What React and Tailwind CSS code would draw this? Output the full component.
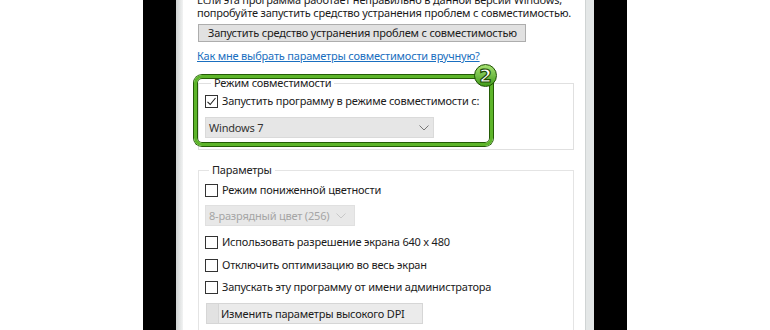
import React from "react";

function Check({ checked }) {
  return (
    <span className="w-[13px] h-[13px] border border-[#333] bg-white flex items-center justify-center shrink-0">
      {checked && (
        <svg width="11" height="11" viewBox="0 0 11 11">
          <path d="M1.5 5.8 L4.2 8.5 L9.5 2" fill="none" stroke="#222" strokeWidth="1.1" />
        </svg>
      )}
    </span>
  );
}

function Row({ checked, children, className }) {
  return (
    <div className={"flex items-center h-[16px] gap-[4px] " + className}>
      <Check checked={checked} />
      <span className="whitespace-nowrap">{children}</span>
    </div>
  );
}

function Chevron({ color }) {
  return (
    <svg width="10" height="6" viewBox="0 0 10 6" className="shrink-0">
      <path d="M0.5 0.5 L5 5 L9.5 0.5" fill="none" stroke={color} strokeWidth="1" />
    </svg>
  );
}

export default function App() {
  return (
    <div className="w-[770px] h-[330px] overflow-hidden bg-white flex font-['Noto_Sans',sans-serif] text-[11px] tracking-[-0.2px] text-[#1b1b1b] leading-[16px]">
      <div className="w-[143px] shrink-0 bg-white" />
      <div className="w-[33px] shrink-0 bg-black" />
      <div className="w-[7px] shrink-0 bg-gradient-to-r from-[#cdd1d1] to-[#f2f3f3]" />
      <div className="w-[402px] shrink-0 bg-white pl-[14px] flex flex-col">
        <p className="mt-[-7px] leading-[13px] whitespace-nowrap">
          Если эта программа работает неправильно в данной версии Windows,
          <br />
          попробуйте запустить средство устранения проблем с совместимостью.
        </p>
        <div className="mt-[5px] ml-[1px] w-[328px] h-[21px] bg-[#e1e1e1] border border-[#adadad] flex items-center pl-[9px] whitespace-nowrap">
          Запустить средство устранения проблем с совместимостью
        </div>
        <a className="mt-[6px] text-[#1a6fc0] underline whitespace-nowrap w-fit">
          Как мне выбрать параметры совместимости вручную?
        </a>

        <div className="relative mt-[11px] ml-[1px] w-[376px]">
          <fieldset className="border border-[#e0e0e0] pb-[11px] pl-[6px]">
            <legend className="ml-[6px] px-[3px] leading-[16px] text-[#222]">Режим совместимости</legend>
            <Row checked className="mt-[2px]">Запустить программу в режиме совместимости с:</Row>
            <div className="mt-[8px] w-[229px] h-[21px] bg-[#e6e6e6] border border-[#dadada] flex items-center justify-between pl-[3px] pr-[4px] text-[#333]">
              <span>Windows 7</span>
              <Chevron color="#777" />
            </div>
          </fieldset>
          <div className="absolute left-[-4px] top-[0px] w-[299px] h-[71px] rounded-[8px] border-[3px] border-[#5db52a] shadow-[0_0_0_1px_#245c06,inset_0_0_0_1px_#245c06]" />
          <div className="absolute left-[276px] top-[-11px] w-[23px] h-[23px] rounded-full bg-gradient-to-b from-[#a6e272] to-[#3f9c14] border-[1.5px] border-[#1f4f05] flex items-center justify-center">
            <span className="font-['DejaVu_Sans',sans-serif] font-bold text-[18px] leading-none tracking-normal text-white [-webkit-text-stroke:1.2px_#1f4f05]">2</span>
          </div>
        </div>

        <fieldset className="mt-[12px] ml-[1px] w-[376px] border border-[#e4e4e4] pl-[6px] pb-[20px]">
          <legend className="ml-[4px] px-[3px] leading-[16px] text-[#222]">Параметры</legend>
          <Row className="mt-[4px]">Режим пониженной цветности</Row>
          <div className="mt-[7px] w-[150px] h-[21px] bg-[#e8e8e8] border border-[#e0e0e0] flex items-center justify-between pl-[3px] pr-[8px] text-[#a5a5a5] whitespace-nowrap overflow-hidden">
            <span>8-разрядный цвет (256)</span>
            <Chevron color="#c8c8c8" />
          </div>
          <Row className="mt-[8px]">Использовать разрешение экрана 640 x 480</Row>
          <Row className="mt-[7px]">Отключить оптимизацию во весь экран</Row>
          <Row className="mt-[6px]">Запускать эту программу от имени администратора</Row>
          <div className="mt-[8px] ml-[1px] w-[217px] h-[21px] bg-[#ebebeb] border border-[#d6d6d6] flex items-center whitespace-nowrap">
            <span className="w-[12px] self-stretch bg-[#e2e2e2] border-r border-[#d6d6d6]" />
            <span className="pl-[2px]">Изменить параметры высокого DPI</span>
          </div>
        </fieldset>
      </div>
      <div className="w-[9px] shrink-0 bg-[#e4e7e7] border-l border-[#d0d4d4]" />
      <div className="w-[33px] shrink-0 bg-black" />
      <div className="flex-1 bg-white" />
    </div>
  );
}
